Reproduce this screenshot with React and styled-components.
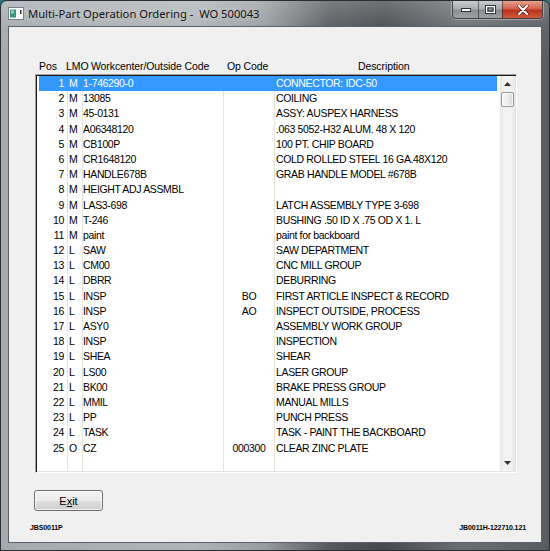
import React from "react";
import styled, { createGlobalStyle } from "styled-components";

const Global = createGlobalStyle`
  html, body { margin: 0; padding: 0; background: #2f6f7a; }
  body { font-family: "Liberation Sans", Arial, sans-serif; }
  * { box-sizing: border-box; }
`;

const Window = styled.div`
  width: 550px;
  height: 551px;
  display: flex;
  flex-direction: column;
  border: 1px solid #2a2e33;
  border-radius: 7px 7px 0 0;
  overflow: hidden;
  background:
    linear-gradient(180deg, rgba(255,255,255,0.22) 0px, rgba(255,255,255,0.06) 26px, rgba(255,255,255,0) 60px),
    linear-gradient(90deg, #a4aaaf 0%, #afb4b8 35%, #979ca0 48%, #55595d 60%, #464a4e 70%, #6a6f73 84%, #575c60 100%);
`;

const TitleBar = styled.div`
  height: 25px;
  display: flex;
  align-items: flex-start;
  padding-left: 7px;
  flex-shrink: 0;
`;

const AppIcon = styled.svg`
  margin-top: 6px;
  flex-shrink: 0;
`;

const TitleText = styled.div`
  margin-left: 4px;
  margin-top: 5px;
  font-family: "Noto Sans", "Open Sans", sans-serif;
  font-size: 11.2px;
  line-height: 16px;
  color: #111;
  white-space: pre;
  text-shadow: 0 0 6px rgba(255,255,255,0.6);
`;

const CaptionGroup = styled.div`
  margin-left: auto;
  margin-right: 6px;
  display: flex;
  height: 18px;
  border: 1px solid rgba(40, 40, 40, 0.7);
  border-top: none;
  border-radius: 0 0 4px 4px;
  overflow: hidden;
  box-shadow: 0 0 0 1px rgba(255,255,255,0.35);
`;

const CapButton = styled.div`
  width: ${p => p.$w}px;
  height: 100%;
  display: flex;
  align-items: center;
  justify-content: center;
  border-left: ${p => (p.$first ? "none" : "1px solid rgba(40,40,40,0.6)")};
  background: ${p =>
    p.$close
      ? "linear-gradient(180deg, #e8a08e 0%, #d0634b 45%, #b8321c 55%, #cf5a3a 100%)"
      : "linear-gradient(180deg, rgba(255,255,255,0.55) 0%, rgba(220,224,228,0.45) 45%, rgba(150,156,162,0.45) 55%, rgba(190,196,202,0.5) 100%)"};
`;

const Client = styled.div`
  flex: 1;
  margin: 0 7px 7px 7px;
  border: 1px solid #5c6167;
  background: #f0f0f0;
  display: flex;
  flex-direction: column;
`;

const HeaderRow = styled.div`
  margin-top: 33px;
  padding-left: 30px;
  height: 12px;
  display: grid;
  grid-template-columns: 27px 25px 136px 131px auto;
  font-size: 10.5px;
  letter-spacing: -0.1px;
  line-height: 12px;
  color: #000;
  white-space: nowrap;
`;

const ListBox = styled.div`
  margin-top: 2px;
  margin-left: 26px;
  width: 482px;
  height: 399px;
  display: flex;
  border: 1px solid;
  border-color: #a0a0a0 #ffffff #ffffff #a0a0a0;
  box-shadow: inset 1px 1px 0 #1a1a1a, inset -1px -1px 0 #e3e3e3;
  background: #fff;
  padding: 1px;
`;

const Rows = styled.div`
  width: 462px;
  padding: 0 2px;
  display: flex;
  flex-direction: column;
  background: #fff;
`;

const Row = styled.div`
  display: grid;
  grid-template-columns: 28px 15px 141px 51px 223px;
  height: ${p => (p.$fill ? "auto" : "15.2px")};
  flex: ${p => (p.$fill ? 1 : "none")};
  background: ${p => (p.$selected ? "#3399ff" : "transparent")};
  color: ${p => (p.$selected ? "#ffffff" : "#000000")};
  font-size: 10.5px;
  letter-spacing: -0.35px;
  line-height: 15.2px;
`;

const Cell = styled.div`
  white-space: nowrap;
  overflow: hidden;
  border-left: ${p => (p.$first ? "none" : `1px solid ${p.$selected ? "#3399ff" : "#e8e4da"}`)};
  text-align: ${p => p.$align || "left"};
  padding-left: ${p => p.$pl || 0}px;
  padding-right: ${p => p.$pr || 0}px;
`;

const ScrollBar = styled.div`
  width: 16px;
  display: flex;
  flex-direction: column;
  background: linear-gradient(90deg, #e6e6e6 0%, #f3f3f3 30%, #f3f3f3 70%, #e8e8e8 100%);
  border-left: 1px solid #fbfbfb;
`;

const ArrowBtn = styled.div`
  height: 16px;
  display: flex;
  align-items: center;
  justify-content: center;
`;

const Thumb = styled.div`
  margin: 0 1px;
  height: 15px;
  border: 1px solid #979797;
  border-radius: 2px;
  background: linear-gradient(90deg, #f6f6f6 0%, #ededed 50%, #d9d9d9 100%);
  box-shadow: inset 0 0 0 1px rgba(255,255,255,0.8);
`;

const Track = styled.div`
  flex: 1;
`;

const ExitButton = styled.button`
  margin-top: 17px;
  margin-left: 25px;
  width: 69px;
  height: 21px;
  padding: 0;
  border: 1px solid #707070;
  border-radius: 3px;
  background: linear-gradient(180deg, #f2f2f2 0%, #ebebeb 50%, #dddddd 51%, #cfcfcf 100%);
  box-shadow: inset 0 0 0 1px rgba(255,255,255,0.7);
  font-family: "Liberation Sans", Arial, sans-serif;
  font-size: 11px;
  color: #000;
  align-self: flex-start;
`;

const Underline = styled.span`
  text-decoration: underline;
`;

const Footer = styled.div`
  margin-top: auto;
  margin-bottom: 10px;
  padding: 0 15px 0 21px;
  display: flex;
  justify-content: space-between;
  font-size: 7px;
  font-weight: bold;
  line-height: 8px;
  color: #000;
  letter-spacing: -0.1px;
`;

const data = [
  ["1", "M", "1-746290-0", "", "CONNECTOR: IDC-50"],
  ["2", "M", "13085", "", "COILING"],
  ["3", "M", "45-0131", "", "ASSY: AUSPEX HARNESS"],
  ["4", "M", "A06348120", "", ".063 5052-H32 ALUM. 48 X 120"],
  ["5", "M", "CB100P", "", "100 PT. CHIP BOARD"],
  ["6", "M", "CR1648120", "", "COLD ROLLED STEEL 16 GA.48X120"],
  ["7", "M", "HANDLE678B", "", "GRAB HANDLE MODEL #678B"],
  ["8", "M", "HEIGHT ADJ ASSMBL", "", ""],
  ["9", "M", "LAS3-698", "", "LATCH ASSEMBLY TYPE 3-698"],
  ["10", "M", "T-246", "", "BUSHING .50 ID X .75 OD X 1. L"],
  ["11", "M", "paint", "", "paint for backboard"],
  ["12", "L", "SAW", "", "SAW DEPARTMENT"],
  ["13", "L", "CM00", "", "CNC MILL GROUP"],
  ["14", "L", "DBRR", "", "DEBURRING"],
  ["15", "L", "INSP", "BO", "FIRST ARTICLE INSPECT & RECORD"],
  ["16", "L", "INSP", "AO", "INSPECT OUTSIDE, PROCESS"],
  ["17", "L", "ASY0", "", "ASSEMBLY WORK GROUP"],
  ["18", "L", "INSP", "", "INSPECTION"],
  ["19", "L", "SHEA", "", "SHEAR"],
  ["20", "L", "LS00", "", "LASER GROUP"],
  ["21", "L", "BK00", "", "BRAKE PRESS GROUP"],
  ["22", "L", "MMIL", "", "MANUAL MILLS"],
  ["23", "L", "PP", "", "PUNCH PRESS"],
  ["24", "L", "TASK", "", "TASK - PAINT THE BACKBOARD"],
  ["25", "O", "CZ", "000300", "CLEAR ZINC PLATE"],
];

function ListRow({ r, selected, fill }) {
  return (
    <Row $selected={selected} $fill={fill}>
      <Cell $first $align="right" $pr={3}>{r[0]}</Cell>
      <Cell $selected={selected} $pl={1}>{r[1]}</Cell>
      <Cell $selected={selected} $pl={0}>{r[2]}</Cell>
      <Cell $selected={selected} $align="center">{r[3]}</Cell>
      <Cell $selected={selected} $pl={1}>{r[4]}</Cell>
    </Row>
  );
}

export default function App() {
  return (
    <>
      <Global />
      <Window>
        <TitleBar>
          <AppIcon width="16" height="13" viewBox="0 0 16 13">
            <rect x="0.5" y="0.5" width="15" height="12" fill="#fafafa" stroke="#7a7f84" />
            <rect x="2" y="2.5" width="6" height="8" fill="#3f8f7e" />
            <rect x="3" y="3.5" width="3" height="3" fill="#8fd0c0" />
            <rect x="12" y="3" width="1.5" height="4" fill="#333" />
          </AppIcon>
          <TitleText>{"Multi-Part Operation Ordering -  WO 500043"}</TitleText>
          <CaptionGroup>
            <CapButton $w={25} $first>
              <svg width="10" height="5" viewBox="0 0 10 5">
                <rect x="0.5" y="1.5" width="9" height="3" fill="#fff" stroke="#333" strokeWidth="1" />
              </svg>
            </CapButton>
            <CapButton $w={24}>
              <svg width="11" height="9" viewBox="0 0 11 9">
                <rect x="0.5" y="0.5" width="10" height="8" fill="none" stroke="#333" />
                <rect x="1.5" y="1.5" width="8" height="6" fill="none" stroke="#fff" />
                <rect x="3" y="3" width="5" height="3" fill="none" stroke="#333" />
              </svg>
            </CapButton>
            <CapButton $w={40} $close>
              <svg width="12" height="10" viewBox="0 0 12 10">
                <path d="M2 1 L10 9 M10 1 L2 9" stroke="#5a1a10" strokeWidth="3.2" strokeLinecap="round" />
                <path d="M2 1 L10 9 M10 1 L2 9" stroke="#fff" strokeWidth="2" strokeLinecap="round" />
              </svg>
            </CapButton>
          </CaptionGroup>
        </TitleBar>
        <Client>
          <HeaderRow>
            <span>Pos</span>
            <span>LMO</span>
            <span>Workcenter/Outside Code</span>
            <span>Op Code</span>
            <span>Description</span>
          </HeaderRow>
          <ListBox>
            <Rows>
              {data.map((r, i) => (
                <ListRow key={r[0]} r={r} selected={i === 0} />
              ))}
              <ListRow r={["", "", "", "", ""]} fill />
            </Rows>
            <ScrollBar>
              <ArrowBtn>
                <svg width="7" height="4" viewBox="0 0 7 4">
                  <path d="M0 4 L3.5 0 L7 4 Z" fill="#333" />
                </svg>
              </ArrowBtn>
              <Thumb />
              <Track />
              <ArrowBtn>
                <svg width="7" height="4" viewBox="0 0 7 4">
                  <path d="M0 0 L7 0 L3.5 4 Z" fill="#333" />
                </svg>
              </ArrowBtn>
            </ScrollBar>
          </ListBox>
          <ExitButton>
            E<Underline>x</Underline>it
          </ExitButton>
          <Footer>
            <span>JBS0011P</span>
            <span>JB0011H-122710.121</span>
          </Footer>
        </Client>
      </Window>
    </>
  );
}
